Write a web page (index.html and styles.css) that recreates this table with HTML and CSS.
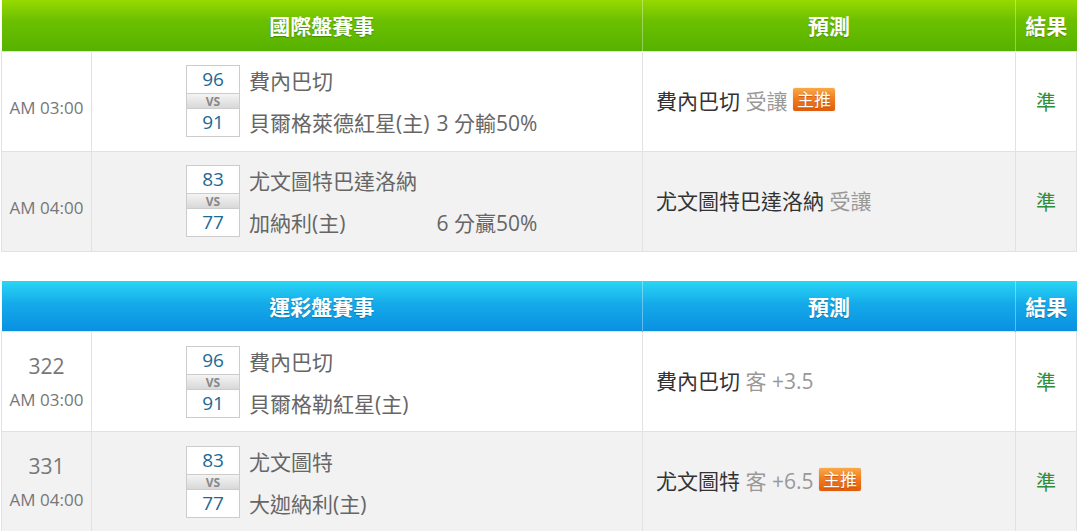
FILE: index.html
```html
<!DOCTYPE html>
<html lang="zh-Hant">
<head>
<meta charset="utf-8">
<link rel="stylesheet" href="styles.css">
</head>
<body>
<div class="page">
  <table class="games intl">
    <colgroup><col class="c-time"><col class="c-match"><col class="c-pred"><col class="c-res"></colgroup>
    <thead>
      <tr><th colspan="2">國際盤賽事</th><th>預測</th><th>結果</th></tr>
    </thead>
    <tbody>
      <tr>
        <td class="time single"><div class="clock">AM 03:00</div></td>
        <td class="match">
          <div class="matchup">
            <div class="score"><div class="pt">96</div><div class="vs">VS</div><div class="pt">91</div></div>
            <div class="teams">
              <div class="team">費內巴切</div>
              <div class="team"><span class="tname">貝爾格萊德紅星(主)</span> 3 分輸50%</div>
            </div>
          </div>
        </td>
        <td class="pred">費內巴切 <span class="sub">受讓</span> <span class="badge">主推</span></td>
        <td class="res">準</td>
      </tr>
      <tr class="alt">
        <td class="time single"><div class="clock">AM 04:00</div></td>
        <td class="match">
          <div class="matchup">
            <div class="score"><div class="pt">83</div><div class="vs">VS</div><div class="pt">77</div></div>
            <div class="teams">
              <div class="team">尤文圖特巴達洛納</div>
              <div class="team"><span class="tname">加納利(主)</span> 6 分贏50%</div>
            </div>
          </div>
        </td>
        <td class="pred">尤文圖特巴達洛納 <span class="sub">受讓</span></td>
        <td class="res">準</td>
      </tr>
    </tbody>
  </table>

  <table class="games lottery">
    <colgroup><col class="c-time"><col class="c-match"><col class="c-pred"><col class="c-res"></colgroup>
    <thead>
      <tr><th colspan="2">運彩盤賽事</th><th>預測</th><th>結果</th></tr>
    </thead>
    <tbody>
      <tr>
        <td class="time"><div class="num">322</div><div class="clock">AM 03:00</div></td>
        <td class="match">
          <div class="matchup">
            <div class="score"><div class="pt">96</div><div class="vs">VS</div><div class="pt">91</div></div>
            <div class="teams">
              <div class="team">費內巴切</div>
              <div class="team">貝爾格勒紅星(主)</div>
            </div>
          </div>
        </td>
        <td class="pred">費內巴切 <span class="sub">客 +3.5</span></td>
        <td class="res">準</td>
      </tr>
      <tr class="alt">
        <td class="time"><div class="num">331</div><div class="clock">AM 04:00</div></td>
        <td class="match">
          <div class="matchup">
            <div class="score"><div class="pt">83</div><div class="vs">VS</div><div class="pt">77</div></div>
            <div class="teams">
              <div class="team">尤文圖特</div>
              <div class="team">大迦納利(主)</div>
            </div>
          </div>
        </td>
        <td class="pred">尤文圖特 <span class="sub">客 +6.5</span> <span class="badge">主推</span></td>
        <td class="res">準</td>
      </tr>
    </tbody>
  </table>
</div>
</body>
</html>
```

FILE: styles.css
```css
* { box-sizing: border-box; }
html, body { margin: 0; padding: 0; background: #fff; }
body {
  font-family: "Open Sans", "Noto Sans CJK TC", sans-serif;
  color: #333;
}
.page {
  display: flex;
  flex-direction: column;
  gap: 29px;
  padding-left: 1px;
}
.games {
  width: 1076px;
  border-collapse: collapse;
  table-layout: fixed;
}
.c-time { width: 90px; }
.c-match { width: 551px; }
.c-pred { width: 373px; }
.c-res { width: 61px; }

.games th {
  height: 51px;
  padding: 0;
  color: #fff;
  font-size: 21px;
  font-weight: bold;
  text-align: center;
  text-shadow: 0 1px 1px rgba(0,0,0,0.25);
  border-left: 1px solid rgba(255,255,255,0.35);
}
.games th:first-child { border-left: none; }
.intl thead tr { background: linear-gradient(#97da00 0%, #6cc000 40%, #56b200 100%); }
.lottery thead tr { background: linear-gradient(#2ad6f4 0%, #14aaea 45%, #0a8fe0 100%); }

.games td {
  height: 100px;
  padding: 0;
  border: 1px solid #e2e2e2;
  vertical-align: middle;
}
.games tbody tr { background: #fff; }
.games tbody tr.alt { background: #f2f2f2; }

.time { text-align: center; color: #777; }
.time.single { padding-top: 14px; }
.clock { font-size: 17px; line-height: 22px; }
.num { font-size: 21px; line-height: 26px; margin-bottom: 10px; }

.match { padding-left: 94px !important; }
.matchup { display: flex; align-items: stretch; gap: 9px; }
.score {
  width: 54px;
  border: 1px solid #ccc;
  background: #fff;
  display: flex;
  flex-direction: column;
  text-align: center;
}
.pt {
  height: 27px;
  line-height: 26px;
  font-size: 19px;
  color: #1d6a96;
}
.vs {
  height: 16px;
  line-height: 15px;
  font-size: 12px;
  font-weight: bold;
  color: #888;
  background: linear-gradient(#f4f4f4, #d8d8d8);
  border-top: 1px solid #ccc;
  border-bottom: 1px solid #ccc;
}
.teams {
  display: flex;
  flex-direction: column;
  justify-content: space-between;
  padding-top: 3px;
}
.team {
  font-size: 21px;
  color: #666;
  line-height: 27px;
  white-space: nowrap;
}
.tname { display: inline-block; min-width: 182px; }

.pred {
  padding-left: 13px !important;
  padding-bottom: 3px !important;
  font-size: 21px;
  color: #333;
  white-space: nowrap;
}
.sub { color: #999; }
.badge {
  display: inline-block;
  vertical-align: 3px;
  padding: 0 4px;
  height: 23px;
  line-height: 23px;
  font-size: 17px;
  color: #fff;
  border-radius: 2px;
  background: linear-gradient(#f9a848 0%, #f07a1c 50%, #e25c0a 100%);
  box-shadow: 0 0 1px rgba(200,80,0,0.6);
  text-shadow: 0 1px 1px rgba(150,40,0,0.5);
}
.res {
  text-align: center;
  font-size: 20px;
  color: #2f8f3a;
}
```
